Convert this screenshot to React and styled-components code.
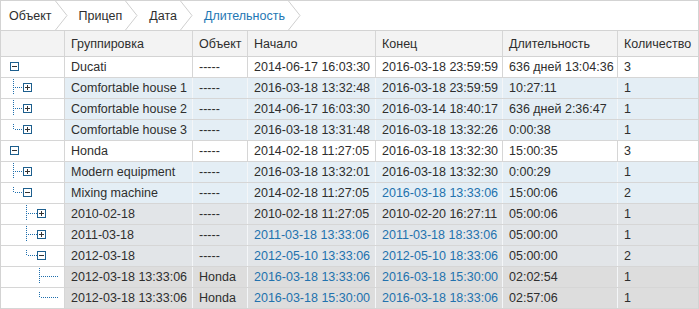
import React from 'react';
import styled, { createGlobalStyle } from 'styled-components';

const GlobalStyle = createGlobalStyle`
  html, body {
    margin: 0;
    padding: 0;
    background: #fff;
  }
  body {
    font-family: "Liberation Sans", Arial, sans-serif;
    font-size: 12.5px;
    color: #2e2e2e;
  }
`;

const COLUMNS = '64px 128px 55px 128px 127px 115px 1fr';

const Frame = styled.div`
  width: 699px;
  height: 309px;
  box-sizing: border-box;
  border: 1px solid #d3d3d3;
  border-bottom: none;
  overflow: hidden;
`;

const Crumbs = styled.div`
  display: flex;
  align-items: stretch;
  height: 29px;
  border-bottom: 1px solid #d3d3d3;
`;

const Crumb = styled.div`
  display: flex;
  align-items: center;
  padding-left: ${p => (p.first ? '8px' : '11px')};
  color: ${p => (p.active ? '#1f77b4' : '#2e2e2e')};
`;

const CrumbText = styled.span`
  padding-right: 3px;
`;

const Chevron = () => (
  <svg width="13" height="29" viewBox="0 0 13 29">
    <polyline points="0.5,0 12,14.5 0.5,29" fill="none" stroke="#cfcfcf" strokeWidth="1" />
  </svg>
);

const HeaderRow = styled.div`
  display: grid;
  grid-template-columns: ${COLUMNS};
  height: 25px;
  background: #f3f3f3;
  border-bottom: 1px solid #d3d3d3;
`;

const HeadCell = styled.div`
  display: flex;
  align-items: center;
  padding: 0 6px;
  border-right: 1px solid #d6d6d6;
  white-space: nowrap;
  &:last-child {
    border-right: none;
  }
`;

const toneBg = {
  0: '#ffffff',
  1: '#e4eef5',
  2: '#e2e5e8',
  3: '#dddddd',
};

const Row = styled.div`
  display: grid;
  grid-template-columns: ${COLUMNS};
  height: 20px;
  border-bottom: 1px solid #d6d6d6;
`;

const TreeCell = styled.div`
  background: #fff;
  border-right: 1px solid #d6d6d6;
`;

const Cell = styled.div`
  display: flex;
  align-items: center;
  padding: 0 6px;
  background: ${p => toneBg[p.level]};
  border-right: 1px solid ${p => (p.level === 0 ? '#d6d6d6' : '#f4f6f8')};
  color: ${p => (p.link ? '#2272ae' : '#2e2e2e')};
  white-space: nowrap;
  overflow: hidden;
  &:last-child {
    border-right: none;
  }
`;

const BOX_X = [9, 22, 36];
const LINE_X = [12, 25, 38];

const TreeIcon = ({ level, last, open }) => {
  const dot = '#1f6fad';
  const parts = [];
  if (level > 0) {
    const vx = LINE_X[level - 1] + 0.5;
    const y1 = last ? 4 : 1;
    const y2 = last ? 10 : 16;
    parts.push(
      <line key="v" x1={vx} y1={y1} x2={vx} y2={y2} stroke={dot} strokeDasharray="1 1" />
    );
    const hx2 = level === 3 ? 58 : BOX_X[level];
    parts.push(
      <line key="h" x1={vx + 1.5} y1={9.5} x2={hx2} y2={9.5} stroke={dot} strokeDasharray="1 1" />
    );
  }
  if (level < 3) {
    const bx = BOX_X[level];
    parts.push(
      <rect key="b" x={bx + 0.5} y={5.5} width="8" height="8" fill="#fff" stroke="#1d5f8e" />
    );
    parts.push(<line key="m" x1={bx + 2} y1={9.5} x2={bx + 7} y2={9.5} stroke="#333" />);
    if (!open) {
      parts.push(<line key="p" x1={bx + 4.5} y1={7} x2={bx + 4.5} y2={12} stroke="#333" />);
    }
  }
  return (
    <svg width="64" height="20" viewBox="0 0 64 20" style={{ display: 'block' }}>
      {parts}
    </svg>
  );
};

const rows = [
  { level: 0, open: true, name: 'Ducati', obj: '-----', start: '2014-06-17 16:03:30', end: '2016-03-18 23:59:59', dur: '636 дней 13:04:36', count: '3' },
  { level: 1, name: 'Comfortable house 1', obj: '-----', start: '2016-03-18 13:32:48', end: '2016-03-18 23:59:59', dur: '10:27:11', count: '1' },
  { level: 1, name: 'Comfortable house 2', obj: '-----', start: '2014-06-17 16:03:30', end: '2016-03-14 18:40:17', dur: '636 дней 2:36:47', count: '1' },
  { level: 1, last: true, name: 'Comfortable house 3', obj: '-----', start: '2016-03-18 13:31:48', end: '2016-03-18 13:32:26', dur: '0:00:38', count: '1' },
  { level: 0, open: true, name: 'Honda', obj: '-----', start: '2014-02-18 11:27:05', end: '2016-03-18 13:32:30', dur: '15:00:35', count: '3' },
  { level: 1, name: 'Modern equipment', obj: '-----', start: '2016-03-18 13:32:01', end: '2016-03-18 13:32:30', dur: '0:00:29', count: '1' },
  { level: 1, last: true, open: true, name: 'Mixing machine', obj: '-----', start: '2014-02-18 11:27:05', end: '2016-03-18 13:33:06', endLink: true, dur: '15:00:06', count: '2' },
  { level: 2, name: '2010-02-18', obj: '-----', start: '2010-02-18 11:27:05', end: '2010-02-20 16:27:11', dur: '05:00:06', count: '1' },
  { level: 2, name: '2011-03-18', obj: '-----', start: '2011-03-18 13:33:06', startLink: true, end: '2011-03-18 18:33:06', endLink: true, dur: '05:00:00', count: '1' },
  { level: 2, last: true, open: true, name: '2012-03-18', obj: '-----', start: '2012-05-10 13:33:06', startLink: true, end: '2012-05-10 18:33:06', endLink: true, dur: '05:00:00', count: '2' },
  { level: 3, name: '2012-03-18 13:33:06', obj: 'Honda', start: '2016-03-18 13:33:06', startLink: true, end: '2016-03-18 15:30:00', endLink: true, dur: '02:02:54', count: '1' },
  { level: 3, last: true, name: '2012-03-18 13:33:06', obj: 'Honda', start: '2016-03-18 15:30:00', startLink: true, end: '2016-03-18 18:33:06', endLink: true, dur: '02:57:06', count: '1' },
];

const crumbs = ['Объект', 'Прицеп', 'Дата', 'Длительность'];
const headers = ['', 'Группировка', 'Объект', 'Начало', 'Конец', 'Длительность', 'Количество'];

const App = () => (
  <>
    <GlobalStyle />
    <Frame>
      <Crumbs>
        {crumbs.map((c, i) => (
          <React.Fragment key={c}>
            <Crumb first={i === 0} active={i === crumbs.length - 1}>
              <CrumbText>{c}</CrumbText>
            </Crumb>
            <Chevron />
          </React.Fragment>
        ))}
      </Crumbs>
      <HeaderRow>
        {headers.map((h, i) => (
          <HeadCell key={i}>{h}</HeadCell>
        ))}
      </HeaderRow>
      {rows.map((r, i) => (
        <Row key={i}>
          <TreeCell>
            <TreeIcon level={r.level} last={r.last} open={r.open} />
          </TreeCell>
          <Cell level={r.level}>{r.name}</Cell>
          <Cell level={r.level}>{r.obj}</Cell>
          <Cell level={r.level} link={r.startLink}>{r.start}</Cell>
          <Cell level={r.level} link={r.endLink}>{r.end}</Cell>
          <Cell level={r.level}>{r.dur}</Cell>
          <Cell level={r.level}>{r.count}</Cell>
        </Row>
      ))}
    </Frame>
  </>
);

export default App;
